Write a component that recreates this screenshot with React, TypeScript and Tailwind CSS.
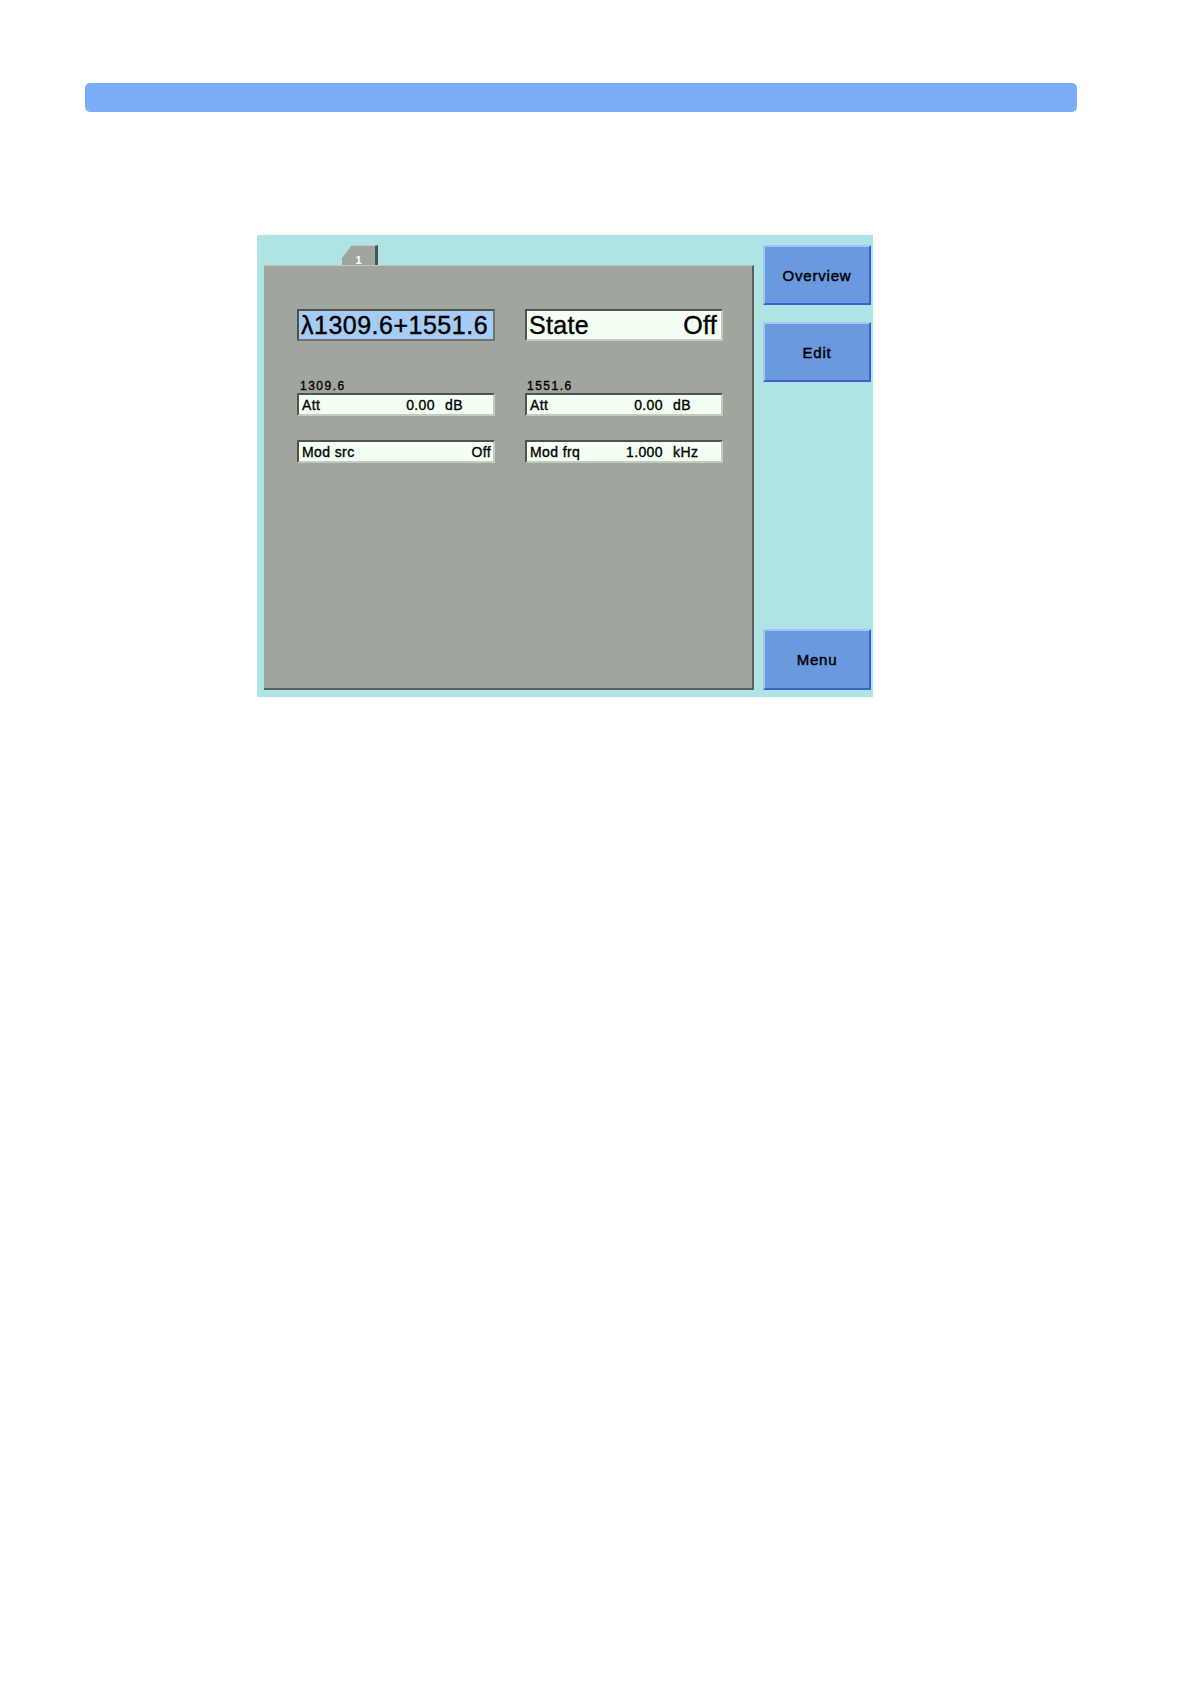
export default function App() {
  const small = "text-[14px] leading-none tracking-[0.4px] text-black [-webkit-text-stroke:0.35px_black]";
  const field = "border-2 border-t-[#4e534d] border-l-[#4e534d] border-b-[#c5cabf] border-r-[#c5cabf] bg-[#f2fff2]";
  const btn = "flex items-center justify-center border-2 border-t-[#a2c6fb] border-l-[#a2c6fb] border-b-[#3c5fd2] border-r-[#3c5fd2] bg-[#6a99de] text-[15px] leading-none tracking-[0.8px] text-black [-webkit-text-stroke:0.45px_black]";
  return (
    <div className="min-h-[1682px] w-[1190px] bg-white [font-family:'Liberation_Sans',Arial,sans-serif]">
      <div className="pt-[83px] pl-[85px]">
        <div className="h-[29px] w-[992px] rounded-[5px] bg-[#7aaef6]" />
      </div>

      <div className="ml-[257px] mt-[123px] flex h-[462px] w-[616px] bg-[#b0e4e4] pl-[7px] pr-[2px] pt-[10px] pb-[7px]">
        {/* left column */}
        <div className="flex w-[490px] flex-col">
          <div className="flex h-[20px] pl-[78px]">
            <div className="flex h-[20px] w-[36px] justify-center border-t border-r-[3px] border-t-[#c4c8bc] border-r-[#4f5650] bg-[#a0a69e] pt-[9px] text-[11px] font-bold leading-none text-white [clip-path:polygon(0_13px,10px_0,100%_0,100%_100%,0_100%)]">
              1
            </div>
          </div>
          <div className="h-[425px] border-t border-r-2 border-b-2 border-t-[#c4c8bc] border-r-[#5a615b] border-b-[#5a615b] bg-[#a0a69e] pl-[33px] pt-[43px]">
            <div className="grid grid-cols-[198px_198px] gap-x-[30px]">
              {/* big fields */}
              <div className="flex h-[32px] items-center border-2 border-t-[#4e534d] border-l-[#4e534d] border-b-[#6e736b] border-r-[#6e736b] bg-[#a6cbf5] px-[2px] text-[25px] leading-none tracking-[0.5px] text-black [-webkit-text-stroke:0.4px_black]">
                λ1309.6+1551.6
              </div>
              <div className={`flex h-[32px] items-center justify-between ${field} px-[2px] text-[25px] leading-none tracking-[0.3px] text-black [-webkit-text-stroke:0.4px_black]`}>
                <span>State</span>
                <span className="pr-[2px]">Off</span>
              </div>

              {/* labels */}
              <div className="mt-[38px] h-[14px] pl-[3px] text-[12px] leading-[14px] tracking-[1.5px] text-black [-webkit-text-stroke:0.35px_black]">1309.6</div>
              <div className="mt-[38px] h-[14px] pl-[2px] text-[12px] leading-[14px] tracking-[1.5px] text-black [-webkit-text-stroke:0.35px_black]">1551.6</div>

              {/* Att */}
              <div className={`flex h-[23px] items-center ${field} pl-[3px] ${small}`}>
                <span className="flex-1">Att</span>
                <span>0.00</span>
                <span className="w-[58px] pl-[10px]">dB</span>
              </div>
              <div className={`flex h-[23px] items-center ${field} pl-[3px] ${small}`}>
                <span className="flex-1">Att</span>
                <span>0.00</span>
                <span className="w-[58px] pl-[10px]">dB</span>
              </div>

              {/* Mod */}
              <div className={`mt-[24px] flex h-[23px] items-center ${field} pl-[3px] pr-[2px] ${small}`}>
                <span className="flex-1">Mod src</span>
                <span>Off</span>
              </div>
              <div className={`mt-[24px] flex h-[23px] items-center ${field} pl-[3px] ${small}`}>
                <span className="flex-1">Mod frq</span>
                <span>1.000</span>
                <span className="w-[58px] pl-[10px]">kHz</span>
              </div>
            </div>
          </div>
        </div>

        {/* right column */}
        <div className="ml-[9px] flex w-[108px] flex-col">
          <button className={`h-[60px] ${btn}`}>Overview</button>
          <button className={`mt-[17px] h-[60px] ${btn}`}>Edit</button>
          <div className="flex-1" />
          <button className={`h-[61px] ${btn}`}>Menu</button>
        </div>
      </div>
    </div>
  );
}
